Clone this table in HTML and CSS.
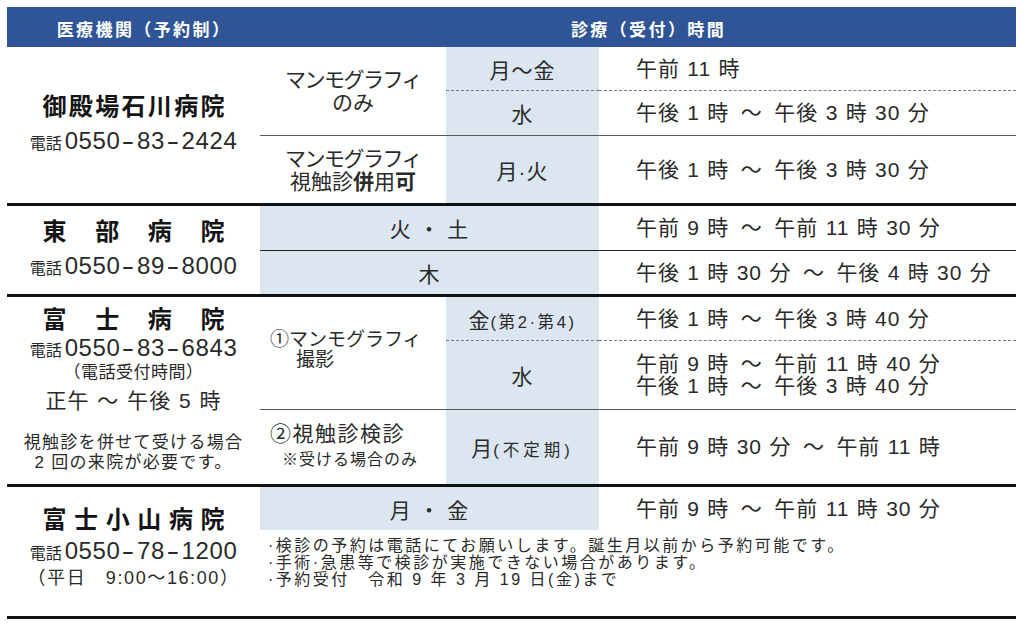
FILE: index.html
```html
<!DOCTYPE html>
<html lang="ja">
<head>
<meta charset="utf-8">
<title>マンモグラフィ検診 医療機関</title>
<link rel="stylesheet" href="styles.css">
</head>
<body>
<div class="sheet">
  <div class="head">
    <div class="head-left">医療機関（予約制）</div>
    <div class="head-right">診療（受付）時間</div>
  </div>

  <section class="block b1">
    <div class="hosp">
      <div class="name">御殿場石川病院</div>
      <div class="phone"><span class="tel">電話</span><span class="num">0550<span class="hy">-</span>83<span class="hy">-</span>2424</span></div>
    </div>
    <div class="kind k-top"><span class="kana">マンモグラフィ</span><span>のみ</span></div>
    <div class="day"><span>月～金</span></div>
    <div class="time"><div>午前 11 時</div></div>
    <div class="day dash"><span>水</span></div>
    <div class="time dash"><div>午後 1 時&ensp;～&ensp;午後 3 時 30 分</div></div>
    <div class="kind line"><span class="kana">マンモグラフィ</span><span>視触診<b>併</b>用<b>可</b></span></div>
    <div class="day line"><span>月·火</span></div>
    <div class="time line"><div>午後 1 時&ensp;～&ensp;午後 3 時 30 分</div></div>
  </section>

  <section class="block b2">
    <div class="hosp">
      <div class="name">東部病院</div>
      <div class="phone"><span class="tel">電話</span><span class="num">0550<span class="hy">-</span>89<span class="hy">-</span>8000</span></div>
    </div>
    <div class="day span2"><span>火 ・ 土</span></div>
    <div class="time"><div>午前 9 時&ensp;～&ensp;午前 11 時 30 分</div></div>
    <div class="day span2 line-dark"><span>木</span></div>
    <div class="time line-dark"><div>午後 1 時 30 分&ensp;～&ensp;午後 4 時 30 分</div></div>
  </section>

  <section class="block b3">
    <div class="hosp hosp-top">
      <div class="name n3">富士病院</div>
      <div class="phone p3"><span class="tel">電話</span><span class="num">0550<span class="hy">-</span>83<span class="hy">-</span>6843</span></div>
      <div class="sub p3-paren">（電話受付時間）</div>
      <div class="noon">正午 ～ 午後 5 時</div>
      <div class="remark">視触診を併せて受ける場合</div>
      <div class="remark">2 回の来院が必要です。</div>
    </div>
    <div class="kind kind-left k-mammo"><span>①マンモグラフィ</span><span class="indent">撮影</span></div>
    <div class="day"><span>金<span class="small">(第2·第4)</span></span></div>
    <div class="time"><div>午後 1 時&ensp;～&ensp;午後 3 時 40 分</div></div>
    <div class="day dash"><span>水</span></div>
    <div class="time dash"><div>午前 9 時&ensp;～&ensp;午前 11 時 40 分</div><div>午後 1 時&ensp;～&ensp;午後 3 時 40 分</div></div>
    <div class="kind kind-left k-palp line"><span class="kanji">②視触診検診</span><span class="only">※受ける場合のみ</span></div>
    <div class="day line"><span>月<span class="small wide">(不定期)</span></span></div>
    <div class="time line"><div>午前 9 時 30 分&ensp;～&ensp;午前 11 時</div></div>
  </section>

  <section class="block b4">
    <div class="hosp hosp-top">
      <div class="name n4">富士小山病院</div>
      <div class="phone p4"><span class="tel">電話</span><span class="num">0550<span class="hy">-</span>78<span class="hy">-</span>1200</span></div>
      <div class="sub p4-paren">（平日　9:00～16:00）</div>
    </div>
    <div class="day span2"><span>月 ・ 金</span></div>
    <div class="time"><div>午前 9 時&ensp;～&ensp;午前 11 時 30 分</div></div>
    <div class="notes">
      <p>·検診の予約は電話にてお願いします。誕生月以前から予約可能です。</p>
      <p>·手術·急患等で検診が実施できない場合があります。</p>
      <p>·予約受付　令和 9 年 3 月 19 日(金)まで</p>
    </div>
  </section>
</div>
</body>
</html>
```

FILE: styles.css
```css
* {
  box-sizing: border-box;
  margin: 0;
  padding: 0;
}

body {
  margin: 0;
  background: #ffffff;
  font-family: "Liberation Sans", "Noto Sans CJK JP", sans-serif;
  color: #2a2a2a;
}

.sheet {
  width: 1009px;
  margin: 7px 0 0 7px;
}

/* header bar */
.head {
  display: flex;
  height: 40px;
  padding-top: 12px;
  background: #2f5597;
  color: #ffffff;
  font-size: 17px;
  font-weight: 700;
  line-height: 24px;
  letter-spacing: 2.4px;
}

.head-left {
  width: 274px;
  text-align: center;
}

.head-right {
  flex: 1;
  text-align: center;
}

/* hospital blocks */
.block {
  display: grid;
  grid-template-columns: 253px 186px 153px 1fr;
  border-bottom: 3px solid #111111;
}

.b1 { grid-template-rows: 43px 45px 68px; }
.b2 { grid-template-rows: 44px 44px; }
.b3 { grid-template-rows: 43px 69px 75px; }
.b4 { grid-template-rows: 43px 86px; }

.hosp {
  grid-column: 1;
  grid-row: 1 / -1;
  display: flex;
  flex-direction: column;
  align-items: center;
  justify-content: center;
}

.hosp-top {
  justify-content: flex-start;
}

.b3 .hosp { padding-top: 8px; }
.b4 .hosp { padding-top: 18px; }

.name {
  width: 182px;
  font-size: 24px;
  font-weight: 700;
  line-height: 34px;
  color: #141414;
  text-align: justify;
  text-align-last: justify;
}

.phone {
  line-height: 34px;
  white-space: nowrap;
}

.tel {
  font-size: 16px;
  margin-right: 3px;
}

.num {
  font-size: 24px;
  letter-spacing: 0.6px;
}

.hy {
  display: inline-block;
  margin: 0 4px;
  transform: scaleX(1.6);
}

.n3, .n4 { line-height: 30px; }
.p3 { line-height: 26px; }
.p4 { line-height: 32px; }

.sub {
  font-size: 17px;
  letter-spacing: 0.5px;
  white-space: nowrap;
}

.p3-paren { line-height: 18px; }
.p4-paren { line-height: 16px; font-size: 18px; letter-spacing: 1.6px; }

.noon {
  font-size: 21px;
  line-height: 38px;
  letter-spacing: 1px;
  word-spacing: 1px;
  white-space: nowrap;
}

.remark {
  font-size: 17px;
  line-height: 20px;
  letter-spacing: 1.3px;
  white-space: nowrap;
}

.noon + .remark { margin-top: 13px; }

/* second column: examination type */
.kind {
  display: flex;
  flex-direction: column;
  align-items: center;
  justify-content: center;
  font-size: 21px;
  line-height: 23px;
  white-space: nowrap;
}

.k-top { grid-row: span 2; }

.kind b { font-weight: 700; }

.kana { letter-spacing: -1.5px; }

.kind-left {
  align-items: flex-start;
  padding-left: 10px;
}

.k-mammo {
  grid-row: span 2;
  font-size: 19px;
  line-height: 20px;
  padding-bottom: 6px;
}

.indent { padding-left: 26px; }

.k-palp { line-height: 26px; }

.kanji { letter-spacing: 1.5px; }

.only {
  font-size: 16px;
  letter-spacing: 1px;
  padding-left: 12px;
}

/* third column: days */
.day {
  display: flex;
  align-items: center;
  justify-content: center;
  background: #dce6f1;
  font-size: 21px;
  letter-spacing: 1px;
  white-space: nowrap;
}

.span2 { grid-column: 2 / 4; }

.small {
  font-size: 16.5px;
  letter-spacing: 2.6px;
}

.small.wide { letter-spacing: 4px; }

/* fourth column: hours */
.time {
  display: flex;
  flex-direction: column;
  justify-content: center;
  padding-left: 37px;
  font-size: 21px;
  line-height: 22px;
  letter-spacing: 1px;
  word-spacing: 0.5px;
  white-space: nowrap;
}

/* separators */
.dash { border-top: 1px dashed #7a7a7a; }
.line { border-top: 1px solid #5a5a5a; }
.line-dark { border-top: 1px solid #222222; }

/* notes */
.notes {
  grid-column: 2 / 5;
  padding: 7px 0 0 8px;
  font-size: 16px;
  line-height: 17px;
  letter-spacing: 2.5px;
  white-space: nowrap;
}
```
